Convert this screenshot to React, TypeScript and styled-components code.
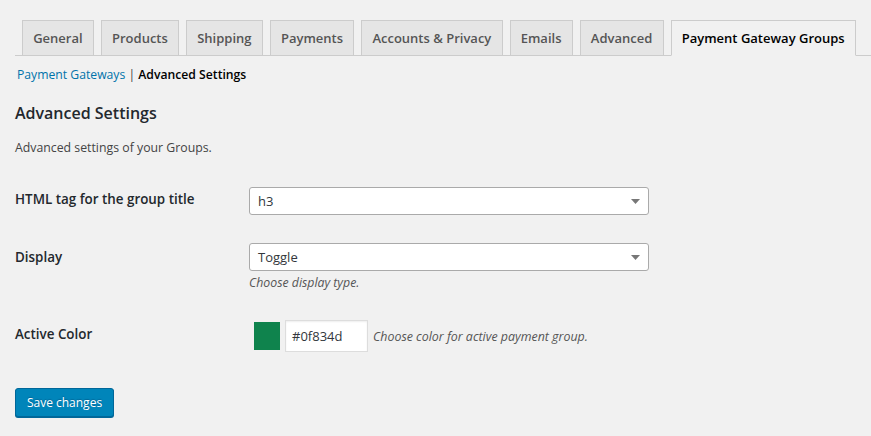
import React from "react";
import styled, { createGlobalStyle } from "styled-components";

const Global = createGlobalStyle`
  html, body { margin: 0; padding: 0; background: #f1f1f1; }
  body { font-family: "Open Sans", "Noto Sans", sans-serif; color: #444; font-size: 13px; }
  * { box-sizing: border-box; }
`;

const Page = styled.div`
  padding: 0 0 0 15px;
  width: 871px;
  height: 436px;
  overflow: hidden;
`;

const TabBar = styled.nav`
  display: flex;
  align-items: flex-end;
  padding-top: 20px;
  border-bottom: 1px solid #ccc;
`;

const Tab = styled.a<{ $active?: boolean }>`
  display: flex;
  align-items: center;
  height: 36px;
  margin: 0 0 -1px 7px;
  padding: 0 10.2px;
  border: 1px solid #ccc;
  border-bottom-color: ${(p) => (p.$active ? "#f1f1f1" : "#ccc")};
  background: ${(p) => (p.$active ? "#f1f1f1" : "#e5e5e5")};
  color: ${(p) => (p.$active ? "#000" : "#555")};
  font-size: 13px;
  font-weight: 600;
  white-space: nowrap;
  text-decoration: none;
`;

const Breadcrumbs = styled.div`
  margin-top: 9px;
  padding-left: 2px;
  line-height: 20px;
  font-size: 12.2px;
  color: #444;
`;

const Crumb = styled.a`
  color: #0073aa;
  text-decoration: none;
`;

const Current = styled.span`
  color: #000;
  font-weight: 600;
`;

const Heading = styled.h2`
  margin: 16px 0 0;
  font-size: 16px;
  line-height: 24px;
  font-weight: 600;
  color: #23282d;
`;

const Intro = styled.p`
  margin: 13px 0 0;
  font-size: 12.3px;
  line-height: 20px;
  color: #444;
`;

const Form = styled.div`
  display: grid;
  grid-template-columns: 234px 1fr;
  margin-top: 29px;
  row-gap: 28px;
`;

const Label = styled.div<{ $offset: number }>`
  padding-top: ${(p) => p.$offset}px;
  font-size: 13.4px;
  line-height: 20px;
  font-weight: 600;
  color: #23282d;
`;

const Field = styled.div`
  display: flex;
  flex-direction: column;
`;

const SelectBox = styled.div`
  display: flex;
  align-items: center;
  justify-content: space-between;
  width: 400px;
  height: 28px;
  padding: 0 8px 0 8px;
  background: #fff;
  border: 1px solid #aaa;
  border-radius: 3px;
  font-size: 13px;
  color: #32373c;
`;

const Hint = styled.span`
  margin-top: 3px;
  font-size: 12.3px;
  line-height: 18px;
  font-style: italic;
  color: #555;
`;

const ColorRow = styled.div`
  display: flex;
  align-items: center;
  gap: 5px;
`;

const Swatch = styled.span<{ $color: string }>`
  width: 26px;
  height: 28px;
  margin-left: 5px;
  background: ${(p) => p.$color};
`;

const ColorInput = styled.div`
  display: flex;
  align-items: center;
  width: 83px;
  height: 32px;
  padding: 0 6px;
  background: #fff;
  border: 1px solid #ddd;
  box-shadow: inset 0 1px 2px rgba(0, 0, 0, 0.07);
  font-size: 13px;
  color: #32373c;
`;

const InlineHint = styled.span`
  font-size: 12.4px;
  font-style: italic;
  color: #555;
`;

const SaveButton = styled.button`
  margin-top: 36px;
  width: 99px;
  height: 29px;
  padding: 0;
  background: #0085ba;
  border: 1px solid #006799;
  border-radius: 3px;
  box-shadow: 0 1px 0 #006799;
  color: #fff;
  font-family: "Open Sans", "Noto Sans", sans-serif;
  font-size: 12px;
  text-shadow: 0 -1px 1px #006799;
`;

const Arrow = () => (
  <svg width="9" height="5" viewBox="0 0 9 5">
    <path d="M0 0h9L4.5 5z" fill="#777" />
  </svg>
);

const tabs = [
  "General",
  "Products",
  "Shipping",
  "Payments",
  "Accounts & Privacy",
  "Emails",
  "Advanced",
  "Payment Gateway Groups",
];

export default function App() {
  return (
    <Page>
      <Global />
      <TabBar>
        {tabs.map((t, i) => (
          <Tab key={t} $active={i === tabs.length - 1}>
            {t}
          </Tab>
        ))}
      </TabBar>
      <Breadcrumbs>
        <Crumb>Payment Gateways</Crumb> | <Current>Advanced Settings</Current>
      </Breadcrumbs>
      <Heading>Advanced Settings</Heading>
      <Intro>Advanced settings of your Groups.</Intro>
      <Form>
        <Label $offset={2}>HTML tag for the group title</Label>
        <Field>
          <SelectBox>
            h3
            <Arrow />
          </SelectBox>
        </Field>
        <Label $offset={4}>Display</Label>
        <Field>
          <SelectBox>
            Toggle
            <Arrow />
          </SelectBox>
          <Hint>Choose display type.</Hint>
        </Field>
        <Label $offset={4}>Active Color</Label>
        <Field>
          <ColorRow>
            <Swatch $color="#0f834d" />
            <ColorInput>#0f834d</ColorInput>
            <InlineHint>Choose color for active payment group.</InlineHint>
          </ColorRow>
        </Field>
      </Form>
      <SaveButton>Save changes</SaveButton>
    </Page>
  );
}
